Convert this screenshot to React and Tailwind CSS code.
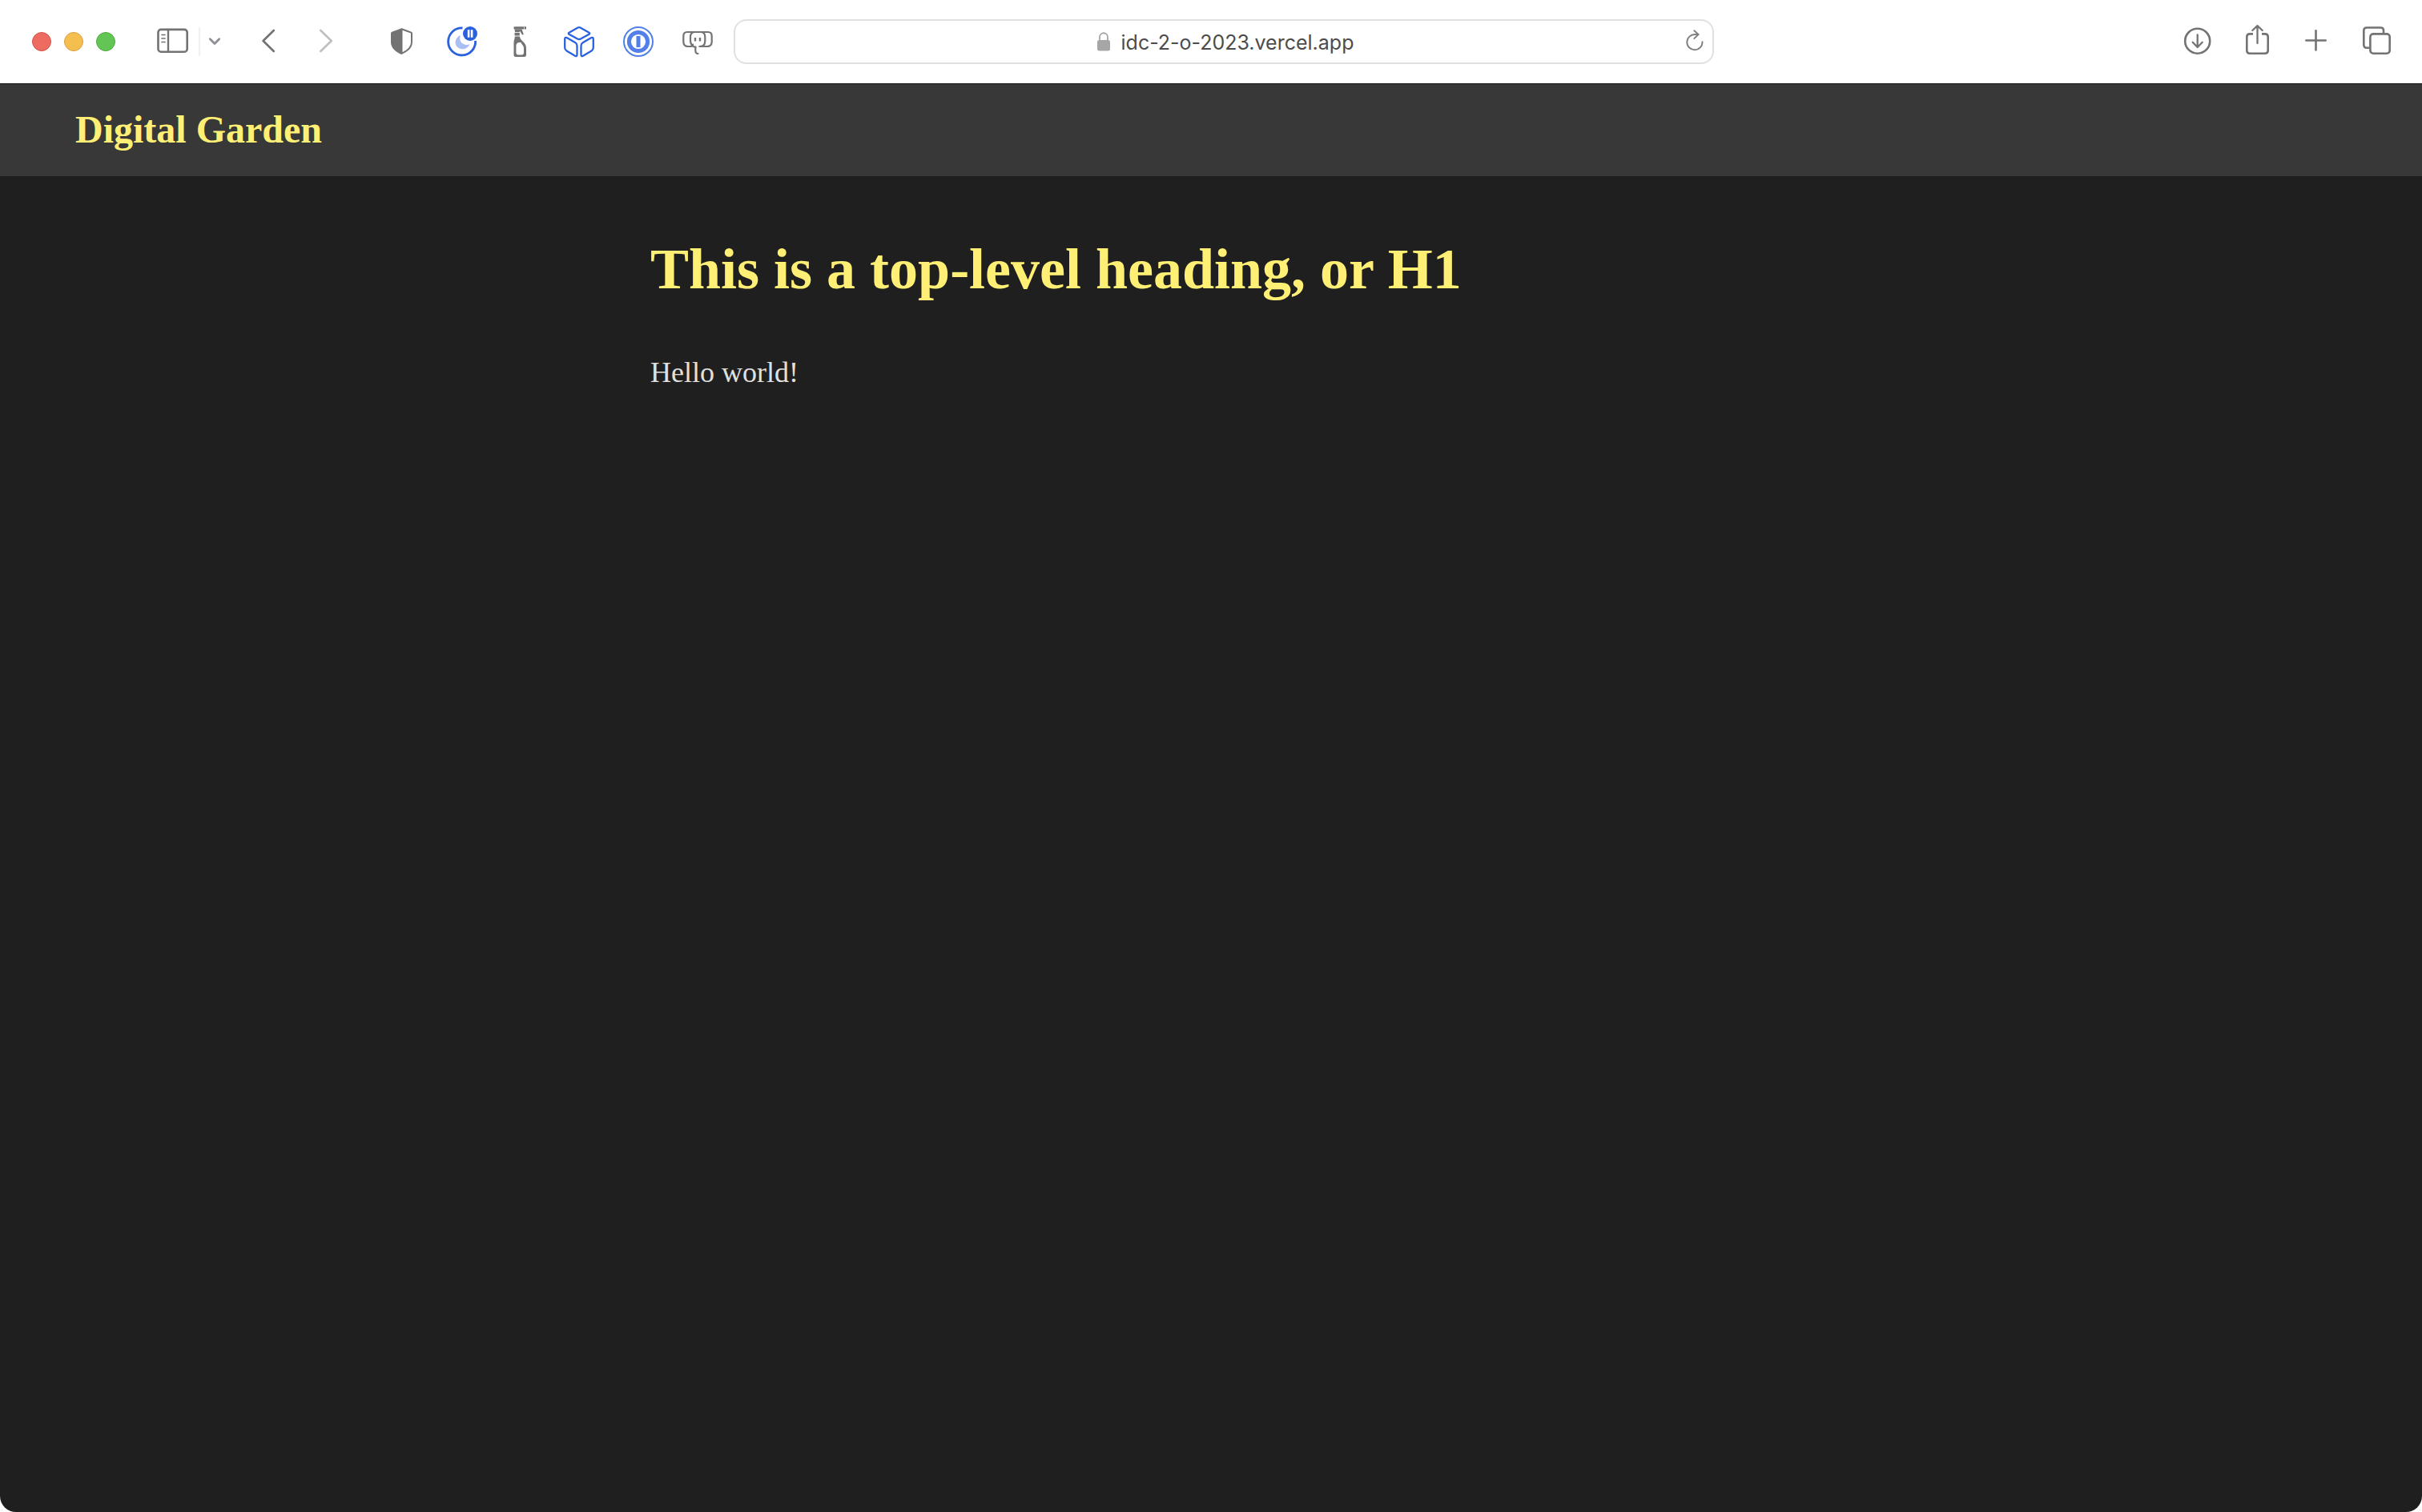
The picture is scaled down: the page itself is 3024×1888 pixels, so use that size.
import React from "react";

function Glyph({ children, className = "" }) {
  return (
    <svg
      viewBox="0 0 40 40"
      className={"size-10 overflow-visible " + className}
      fill="none"
      stroke="currentColor"
      strokeWidth="2.6"
      strokeLinecap="round"
      strokeLinejoin="round"
      aria-hidden="true"
    >
      {children}
    </svg>
  );
}

function ToolButton({ label, className = "text-[#737373]", children }) {
  return (
    <button type="button" aria-label={label} className={"size-10 shrink-0 " + className}>
      <Glyph>{children}</Glyph>
    </button>
  );
}

function WindowControls() {
  return (
    <div className="flex shrink-0 items-center gap-4">
      <button type="button" aria-label="Close" className="size-6 rounded-full border border-[#d35549] bg-[#ed6b60]" />
      <button type="button" aria-label="Minimize" className="size-6 rounded-full border border-[#d8a040] bg-[#f5bf4f]" />
      <button type="button" aria-label="Zoom" className="size-6 rounded-full border border-[#52a842] bg-[#62c554]" />
    </div>
  );
}

function Extensions() {
  return (
    <div className="flex shrink-0 items-center gap-[34px]">
      <ToolButton label="Privacy report">
        <path d="M20.500 4.300 L32.400 8.600 Q33 8.900 33 9.600 V20.500 C33 27 28 31.500 20.500 34.800 Z" strokeWidth="2" />
        <path d="M20.500 3.200 L8.200 7.800 Q7 8.300 7 9.500 V20.500 C7 28 12.500 32.500 20.500 36 Z" fill="currentColor" stroke="none" />
      </ToolButton>
      <ToolButton label="Dark mode" className="text-[#2a61de]">
        <path d="M22.500 3 A17 17 0 1 0 38.600 19" strokeWidth="2.800" strokeLinecap="butt" />
        <path d="M19.800 12 C13 15 11.500 23 16.500 27.300 C21.500 31 29 29.500 31.300 23.200 C24.500 25.800 17 21 19.800 12 Z" fill="#a9bff2" stroke="none" />
        <circle cx="32" cy="10" r="9" fill="currentColor" stroke="none" />
        <path d="M30.100 5.200 V14.800 M34.100 5.200 V14.800" stroke="#fff" strokeWidth="2.600" strokeLinecap="butt" />
      </ToolButton>
      <ToolButton label="Cleaner">
        <g fill="currentColor" stroke="none">
          <path d="M12.500 2 Q12.500 1.200 13.500 1.200 H25 V4.500 H13.500 Q12.500 4.500 12.500 3.500 Z" />
          <path d="M25.600 1.200 H28 V4.500 H25.600 Z" />
          <path d="M13.500 4.500 H22.500 L24.800 11 L23 11.500 L20.200 6.800 L19.500 8 H14 Z" />
          <path d="M13.500 8.800 H19.800 V12.500 H13.500 Z" />
          <path fillRule="evenodd" d="M13.800 13.500 H20 C20 19 28 20.500 28 28 V36.500 Q28 39 25.500 39 H15 Q12.500 39 12.500 36.500 V21 C12.500 18 13.800 17 13.800 13.500 Z M19.500 21 C16.800 21 15.400 22.500 15.400 25.500 V34 Q15.400 36.400 17.500 36.400 H22.800 Q25 36.400 25 34 V28.500 C25 24.500 22.500 24 21.500 21 Z" />
        </g>
      </ToolButton>
      <ToolButton label="Blocks" className="text-[#2a61de]">
        <g strokeWidth="2.300">
          <path d="M18.500 2.500 Q20 1.700 21.500 2.500 L32.500 8.700 Q34 9.700 32.500 10.700 L22 16.500 Q20 17.500 18 16.500 L7.500 10.700 Q6 9.700 7.500 8.700 Z" />
          <path d="M2.200 17 Q2.200 14 5 15.200 L15 21 Q17.500 22.500 17.500 25 V36 Q17.500 39 15 37.700 L4.500 31.500 Q2.200 30.200 2.200 27.500 Z" />
          <path d="M37.800 17 Q37.800 14 35 15.200 L25 21 Q22.500 22.500 22.500 25 V36 Q22.500 39 25 37.700 L35.500 31.500 Q37.800 30.200 37.800 27.500 Z" />
        </g>
      </ToolButton>
      <ToolButton label="Password manager" className="text-[#527fe8]">
        <circle cx="20" cy="20" r="18" strokeWidth="2" />
        <circle cx="20" cy="20" r="11.600" strokeWidth="5" />
        <path d="M20 13 V27" strokeWidth="5" strokeLinecap="butt" />
      </ToolButton>
      <ToolButton label="Notes">
        <g strokeWidth="2.200">
          <path d="M15.500 8 H7 Q2.300 8 2.300 13 V20 Q2.300 26 8 26 H11.500 Q14 26 14 23.500" />
          <path d="M17.500 27 Q11 25.500 11 18.500 V14 Q11 8 17 8 H23.500 Q29.300 8 29.300 14 V19 Q29.300 26 22.800 26" />
          <path d="M24 8 H33 Q37.700 8 37.700 13 V20 Q37.700 26 32 26 H22.500" />
          <path d="M17.300 26.500 V31 Q17.300 35 20.500 35" />
          <path d="M17 15 V19.500 M23 15 V19.500" strokeWidth="2.400" strokeLinecap="butt" />
        </g>
      </ToolButton>
    </div>
  );
}

function AddressBar() {
  return (
    <div className="flex h-14 min-w-0 flex-[1216] items-center rounded-2xl border-2 border-[#e0e0e0] bg-white pr-1">
      <div className="flex min-w-0 flex-1 items-center justify-center gap-3.5 pl-12">
        <svg viewBox="0 0 16 24" className="h-6 w-4 shrink-0 text-[#a6a6a6]" aria-hidden="true">
          <path d="M3 11 V6.500 C3 -0.500 13 -0.500 13 6.500 V11" fill="none" stroke="currentColor" strokeWidth="1.800" />
          <rect x="0" y="10" width="16" height="13.500" rx="2.500" fill="currentColor" />
        </svg>
        <input
          type="text"
          aria-label="Address"
          defaultValue="idc-2-o-2023.vercel.app"
          className="field-sizing-content bg-transparent pt-0.5 font-['Inter',sans-serif] text-[25px] leading-8 text-[#4c4c4c] outline-none"
        />
      </div>
      <ToolButton label="Reload" className="text-[#808080]">
        <g strokeWidth="1.900">
          <path d="M31.500 20.200 A9.600 9.600 0 1 1 22 11 H26.500" />
          <path d="M21.300 6.300 L26.500 11 L21.300 16.200" />
        </g>
      </ToolButton>
    </div>
  );
}

function Toolbar() {
  return (
    <div className="flex h-[104px] items-center bg-white pr-9 pl-10">
      <WindowControls />
      <div className="ml-[52px] flex shrink-0 items-center">
        <ToolButton label="Show sidebar">
          <rect x="1.500" y="4.900" width="36.200" height="27.800" rx="3.500" />
          <path d="M14 5 V32.500" strokeWidth="2.400" />
          <path d="M6 11.500 H10 M6 16 H10 M6 20.500 H10" strokeWidth="1.700" />
        </ToolButton>
        <div className="mr-2.5 ml-3 h-9 w-0.5 bg-[#f0f0f0]" />
        <button type="button" aria-label="Tab groups" className="h-10 w-4 text-[#8e8e96]">
          <svg viewBox="0 0 16 40" className="h-10 w-4" fill="none" stroke="currentColor" strokeWidth="2.800" strokeLinecap="round" strokeLinejoin="round" aria-hidden="true">
            <path d="M2.300 16.800 L8 22.500 L13.700 16.800" />
          </svg>
        </button>
      </div>
      <div className="ml-10 flex shrink-0 items-center gap-8">
        <ToolButton label="Back">
          <path d="M25.800 6 L12.600 19 L25.800 32" />
        </ToolButton>
        <ToolButton label="Forward" className="text-[#bfbfbf]">
          <path d="M12.300 6 L25.800 19 L12.300 32" />
        </ToolButton>
      </div>
      <div className="mr-[25px] ml-[53px] shrink-0">
        <Extensions />
      </div>
      <AddressBar />
      <div className="flex min-w-0 flex-[848] items-center justify-end gap-[35px]">
        <ToolButton label="Downloads">
          <circle cx="20.700" cy="19.200" r="15.500" />
          <path d="M20.700 11.500 V27 M14.700 20.800 L20.700 27 L26.700 20.800" strokeWidth="2.300" />
        </ToolButton>
        <ToolButton label="Share">
          <path d="M15 10.400 H11 Q7.300 10.400 7.300 14 V31 Q7.300 34.700 11 34.700 H30 Q33.700 34.700 33.700 31 V14 Q33.700 10.400 30 10.400 H26" strokeLinecap="butt" />
          <path d="M20.500 22 V0.500 M14.300 6 L20.500 0.200 L26.700 6" strokeWidth="2.300" />
        </ToolButton>
        <ToolButton label="New tab">
          <path d="M18.500 6.300 V30.500 M6.300 18.500 H30.700" />
        </ToolButton>
        <ToolButton label="Tab overview">
          <path d="M10.500 27.700 H7 Q3.300 27.700 3.300 24 V6 Q3.300 2.500 7 2.500 H24.500 Q28 2.500 28 6 V9.500" strokeLinecap="butt" />
          <rect x="11.400" y="10.400" width="24.300" height="24.300" rx="3.700" />
        </ToolButton>
      </div>
    </div>
  );
}

export default function App() {
  return (
    <div className="flex min-h-screen flex-col bg-white">
      <Toolbar />
      <div className="flex flex-1 flex-col overflow-hidden rounded-b-[20px] bg-[#1f1f1f] font-['Liberation_Serif',serif]">
        <header className="border-t border-[#141414] bg-[#383838] px-[94px] pt-[21px] pb-[22px]">
          <a href="#" className="block text-5xl leading-[72px] font-bold text-[#fff075]">
            Digital Garden
          </a>
        </header>
        <main className="mx-auto w-full max-w-[1400px] pt-[62px]">
          <h1 className="text-7xl leading-[108px] font-bold text-[#fff075]">This is a top-level heading, or H1</h1>
          <p className="mt-12 text-4xl leading-[54px] text-[#e0e0e0]">Hello world!</p>
        </main>
      </div>
    </div>
  );
}
